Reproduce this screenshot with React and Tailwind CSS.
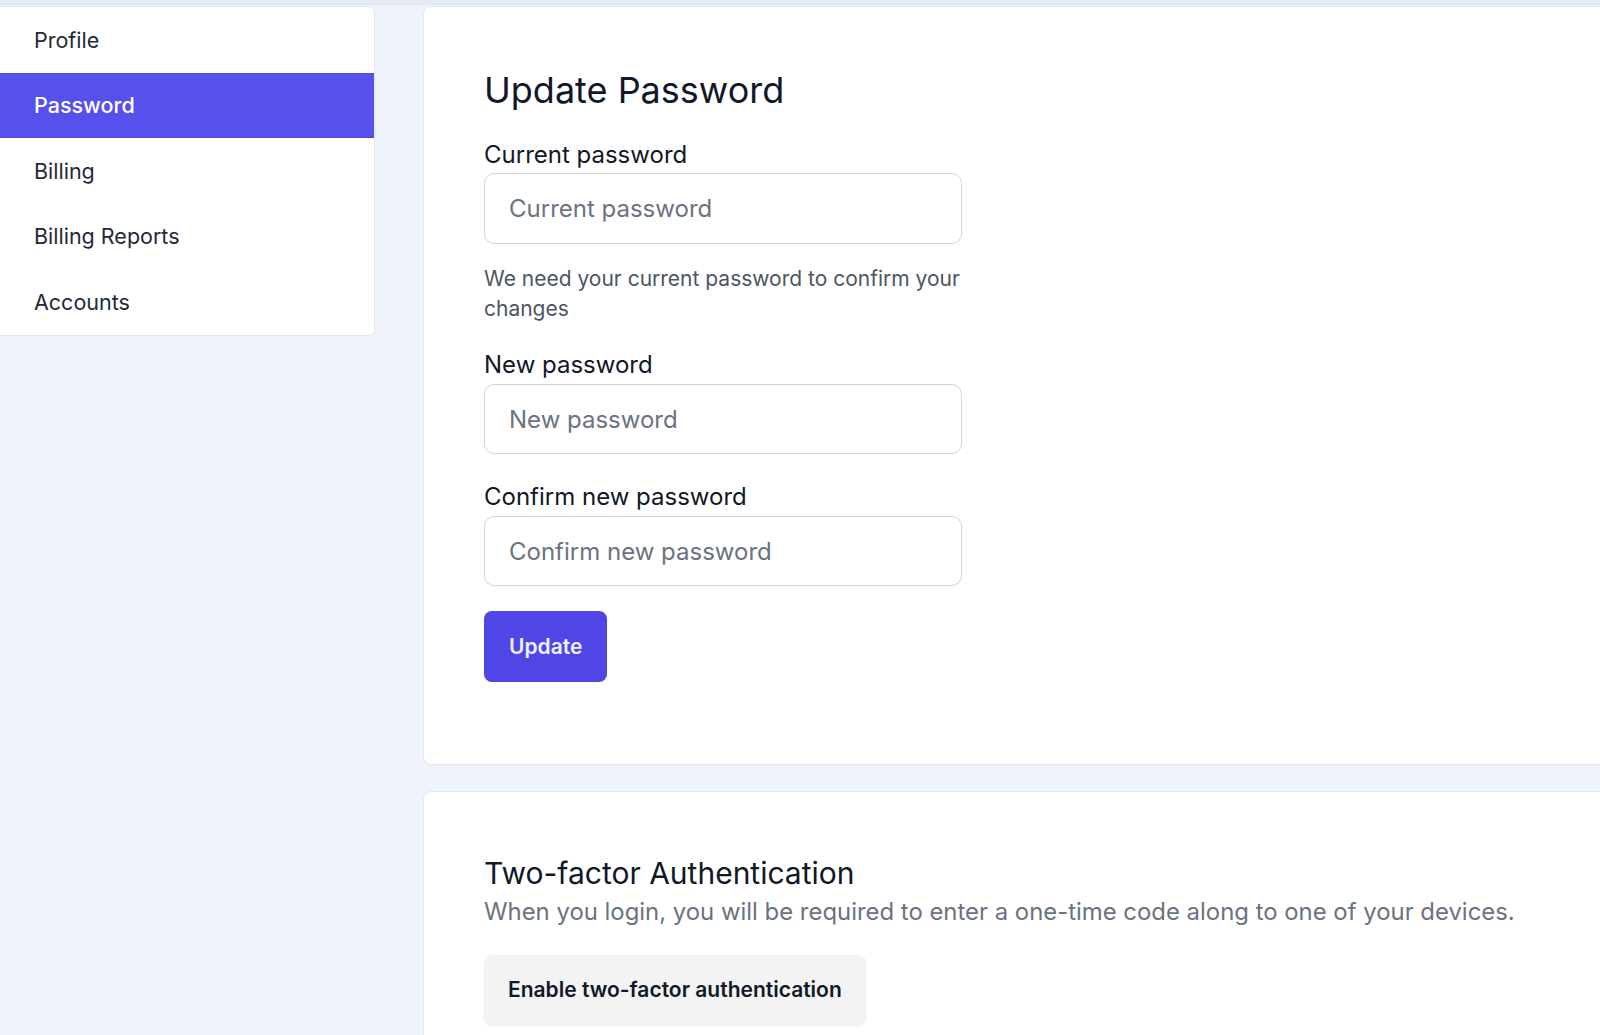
export default function App() {
  const nav = ["Profile", "Password", "Billing", "Billing Reports", "Accounts"];
  return (
    <div
      className="w-[1600px] h-[1035px] overflow-hidden bg-[#eff3fc] text-[#111827]"
      style={{ fontFamily: "Inter, 'Noto Sans', sans-serif" }}
    >
      <div className="h-[5px] bg-[#e6eaf3] border-b border-[#dfe3ec]" />
      <div className="flex items-start gap-[48px] pt-[1px]">
        <div className="w-[375px] shrink-0 bg-white rounded-r-[6px] border border-l-0 border-[#e5e7eb] overflow-hidden">
          {nav.map((n) => (
            <div
              key={n}
              className={
                n === "Password"
                  ? "h-[65.5px] flex items-center pl-[34px] text-[21.5px] font-medium text-white bg-[#5850ec] border-y border-[#4f46e5]"
                  : "h-[65.5px] flex items-center pl-[34px] text-[21.5px] text-[#1f2937]"
              }
            >
              {n}
            </div>
          ))}
        </div>
        <div className="flex-1 -mr-10 flex flex-col gap-[26px]">
          <div className="bg-white rounded-l-[8px] border border-[#e5e7eb] pl-[60px] pt-[63px] pb-[82px]">
            <h1 className="text-[36px] leading-[40px] font-normal text-[#111827]">Update Password</h1>
            <div className="w-[478px] mt-[29px]">
              <label className="block text-[24px] leading-[32px] text-[#111827]">Current password</label>
              <input
                type="password"
                placeholder="Current password"
                className="mt-[2px] w-full h-[71px] rounded-[10px] border border-[#d4d4d8] px-[24px] text-[24px] placeholder:text-[#6b7280] outline-none"
              />
              <p className="mt-[20px] text-[21px] leading-[30px] text-[#4b5563]">
                We need your current password to confirm your changes
              </p>
              <label className="block mt-[25px] text-[24px] leading-[32px] text-[#111827]">New password</label>
              <input
                type="password"
                placeholder="New password"
                className="mt-[3px] w-full h-[70px] rounded-[10px] border border-[#d4d4d8] px-[24px] text-[24px] placeholder:text-[#6b7280] outline-none"
              />
              <label className="block mt-[27px] text-[24px] leading-[32px] text-[#111827]">Confirm new password</label>
              <input
                type="password"
                placeholder="Confirm new password"
                className="mt-[3px] w-full h-[70px] rounded-[10px] border border-[#d4d4d8] px-[24px] text-[24px] placeholder:text-[#6b7280] outline-none"
              />
              <button className="mt-[25px] h-[71px] px-[25px] rounded-[8px] bg-[#4f46e5] text-[#eef0ff] text-[21px] font-semibold">
                Update
              </button>
            </div>
          </div>
          <div className="bg-white rounded-l-[8px] border border-[#e5e7eb] pl-[60px] pt-[63px] pb-[40px]">
            <h2 className="text-[30px] leading-[36px] font-normal text-[#111827]">Two-factor Authentication</h2>
            <p className="mt-[5px] text-[23.9px] leading-[32px] text-[#6b7280]">
              When you login, you will be required to enter a one-time code along to one of your devices.
            </p>
            <button className="mt-[27px] h-[70px] px-[24px] rounded-[8px] bg-[#f3f3f3] shadow-[0_1px_2px_rgba(0,0,0,0.08)] text-[21px] font-semibold text-[#111827]">
              Enable two-factor authentication
            </button>
          </div>
        </div>
      </div>
    </div>
  );
}
